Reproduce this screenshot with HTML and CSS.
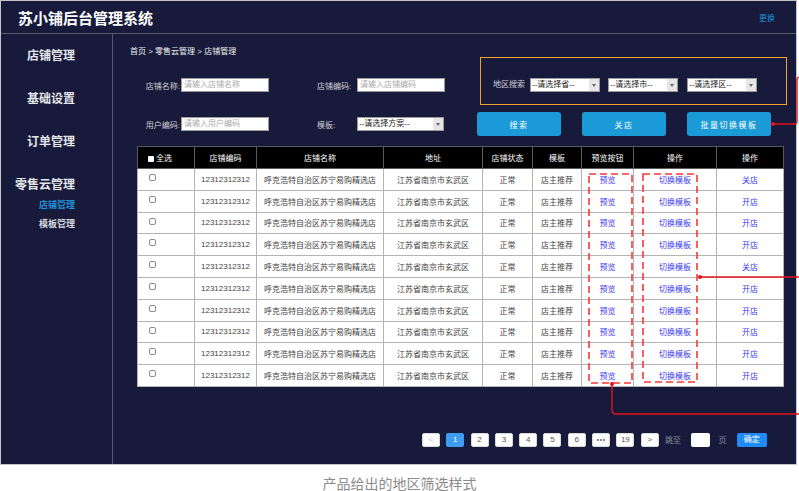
FILE: index.html
```html
<!DOCTYPE html>
<html lang="zh-CN">
<head>
    <meta charset="UTF-8">
    <meta name="viewport" content="width=device-width, initial-scale=1.0">
    <title>苏小铺后台管理系统</title>
    <link rel="stylesheet" href="styles.css">
</head>
<body>

<div class="frame">
    <header class="topbar">
        <h1>苏小铺后台管理系统</h1>
        <a class="swap">更换</a>
    </header>

    <div class="layout">
        <aside class="sidebar">
            <div class="nav-item">店铺管理</div>
            <div class="nav-item">基础设置</div>
            <div class="nav-item">订单管理</div>
            <div class="nav-item group">零售云管理</div>
            <div class="sub-item active">店铺管理</div>
            <div class="sub-item">模板管理</div>
        </aside>

        <main class="content">
            <div class="crumb">首页 &gt; 零售云管理 &gt; 店铺管理</div>

            <div class="filters">
                <div class="filter-fields">
                    <div class="field-row">
                        <div class="field">
                            <span class="lbl">店铺名称:</span>
                            <span class="txt">请输入店铺名称</span>
                        </div>
                        <div class="field second">
                            <span class="lbl">店铺编码:</span>
                            <span class="txt">请输入店铺编码</span>
                        </div>
                    </div>
                    <div class="field-row">
                        <div class="field">
                            <span class="lbl">用户编码:</span>
                            <span class="txt">请输入用户编码</span>
                        </div>
                        <div class="field second">
                            <span class="lbl">模板:</span>
                            <span class="select wide"><span class="val">--请选择方案--</span><span class="arrow"></span></span>
                        </div>
                    </div>
                </div>

                <div class="filter-side">
                    <div class="region">
                        <span class="region-lbl">地区搜索</span>
                        <span class="select"><span class="val">--请选择省--</span><span class="arrow"></span></span>
                        <span class="select"><span class="val">--请选择市--</span><span class="arrow"></span></span>
                        <span class="select"><span class="val">--请选择区--</span><span class="arrow"></span></span>
                    </div>
                    <div class="actions">
                        <button class="btn">搜索</button>
                        <button class="btn">关店</button>
                        <button class="btn">批量切换模板</button>
                    </div>
                </div>
            </div>

            <table class="grid">
                <colgroup>
                    <col class="c-check"><col class="c-code"><col class="c-name"><col class="c-addr">
                    <col class="c-state"><col class="c-tpl"><col class="c-view"><col class="c-op"><col class="c-op2">
                </colgroup>
                <thead>
                    <tr>
                        <th class="first"><span class="check head"></span>全选</th>
                        <th>店铺编码</th>
                        <th>店铺名称</th>
                        <th>地址</th>
                        <th>店铺状态</th>
                        <th>模板</th>
                        <th>预览按钮</th>
                        <th>操作</th>
                        <th>操作</th>
                    </tr>
                </thead>
                <tbody>
                    <tr><td class="first"><span class="check"></span></td><td>12312312312</td><td>呼克浩特自治区苏宁易购精选店</td><td>江苏省南京市玄武区</td><td>正常</td><td>店主推荐</td><td><a>预览</a></td><td><a>切换模板</a></td><td><a>关店</a></td></tr>
                    <tr><td class="first"><span class="check"></span></td><td>12312312312</td><td>呼克浩特自治区苏宁易购精选店</td><td>江苏省南京市玄武区</td><td>正常</td><td>店主推荐</td><td><a>预览</a></td><td><a>切换模板</a></td><td><a>开店</a></td></tr>
                    <tr><td class="first"><span class="check"></span></td><td>12312312312</td><td>呼克浩特自治区苏宁易购精选店</td><td>江苏省南京市玄武区</td><td>正常</td><td>店主推荐</td><td><a>预览</a></td><td><a>切换模板</a></td><td><a>开店</a></td></tr>
                    <tr><td class="first"><span class="check"></span></td><td>12312312312</td><td>呼克浩特自治区苏宁易购精选店</td><td>江苏省南京市玄武区</td><td>正常</td><td>店主推荐</td><td><a>预览</a></td><td><a>切换模板</a></td><td><a>开店</a></td></tr>
                    <tr><td class="first"><span class="check"></span></td><td>12312312312</td><td>呼克浩特自治区苏宁易购精选店</td><td>江苏省南京市玄武区</td><td>正常</td><td>店主推荐</td><td><a>预览</a></td><td><a>切换模板</a></td><td><a>关店</a></td></tr>
                    <tr><td class="first"><span class="check"></span></td><td>12312312312</td><td>呼克浩特自治区苏宁易购精选店</td><td>江苏省南京市玄武区</td><td>正常</td><td>店主推荐</td><td><a>预览</a></td><td><a>切换模板</a></td><td><a>开店</a></td></tr>
                    <tr><td class="first"><span class="check"></span></td><td>12312312312</td><td>呼克浩特自治区苏宁易购精选店</td><td>江苏省南京市玄武区</td><td>正常</td><td>店主推荐</td><td><a>预览</a></td><td><a>切换模板</a></td><td><a>开店</a></td></tr>
                    <tr><td class="first"><span class="check"></span></td><td>12312312312</td><td>呼克浩特自治区苏宁易购精选店</td><td>江苏省南京市玄武区</td><td>正常</td><td>店主推荐</td><td><a>预览</a></td><td><a>切换模板</a></td><td><a>开店</a></td></tr>
                    <tr><td class="first"><span class="check"></span></td><td>12312312312</td><td>呼克浩特自治区苏宁易购精选店</td><td>江苏省南京市玄武区</td><td>正常</td><td>店主推荐</td><td><a>预览</a></td><td><a>切换模板</a></td><td><a>开店</a></td></tr>
                    <tr><td class="first"><span class="check"></span></td><td>12312312312</td><td>呼克浩特自治区苏宁易购精选店</td><td>江苏省南京市玄武区</td><td>正常</td><td>店主推荐</td><td><a>预览</a></td><td><a>切换模板</a></td><td><a>开店</a></td></tr>
                </tbody>
            </table>

            <div class="pager">
                <span class="pg dim">&lt;</span>
                <span class="pg on">1</span>
                <span class="pg">2</span>
                <span class="pg">3</span>
                <span class="pg">4</span>
                <span class="pg">5</span>
                <span class="pg">6</span>
                <span class="pg more"><i></i><i></i><i></i></span>
                <span class="pg">19</span>
                <span class="pg">&gt;</span>
                <span class="jump">跳至</span>
                <span class="pg-input"></span>
                <span class="jump">页</span>
                <span class="ok">确定</span>
            </div>
        </main>
    </div>
</div>

<p class="caption">产品给出的地区筛选样式</p>

<svg class="notes" width="799" height="491" viewBox="0 0 799 491">
    <rect x="589" y="174" width="43" height="209" fill="none" stroke="#ff3535" stroke-width="1.6" stroke-dasharray="7 4"/>
    <rect x="643" y="174" width="54" height="208" fill="none" stroke="#ff3535" stroke-width="1.6" stroke-dasharray="7 4"/>
    <path d="M773 124 H794 Q797 124 797 121 V80 Q797 77 800 77" fill="none" stroke="#e3141c" stroke-width="1.4"/>
    <circle cx="773" cy="124" r="2" fill="#e3141c"/>
    <path d="M700 277 H800" fill="none" stroke="#e3141c" stroke-width="1.4"/>
    <circle cx="700" cy="277" r="2" fill="#e3141c"/>
    <path d="M612 384 V410 Q612 414 616 414 H800" fill="none" stroke="#e3141c" stroke-width="1.4"/>
    <circle cx="612" cy="384" r="2" fill="#e3141c"/>
</svg>

</body>
</html>
```

FILE: styles.css
```css
* {
    box-sizing: border-box;
}
body {
    margin: 0;
    width: 799px;
    height: 491px;
    overflow: hidden;
    position: relative;
    background: #fff;
    font-family: "Liberation Sans", "Noto Sans CJK SC", sans-serif;
}
.frame {
    width: 797px;
    height: 465px;
    background: #171a3a;
    border: 1px solid #c4c4c8;
}
.topbar {
    height: 33px;
    display: flex;
    align-items: center;
    justify-content: space-between;
    padding: 0 21px 0 17px;
    border-bottom: 1px solid #55586e;
}
.topbar h1 {
    margin: 0;
    font-size: 15px;
    font-weight: bold;
    color: #fff;
}
.swap {
    font-size: 8px;
    color: #1f8fd6;
}
.layout {
    display: flex;
    height: 430px;
}
.sidebar {
    width: 112px;
    border-right: 1px solid #55586e;
    text-align: right;
    padding: 15px 37px 0 0;
}
.nav-item {
    font-size: 12px;
    font-weight: bold;
    line-height: 15px;
    color: #e6e6ea;
    margin-bottom: 28px;
}
.nav-item.group {
    margin-bottom: 6px;
}
.sub-item {
    font-size: 9px;
    font-weight: bold;
    line-height: 12px;
    color: #d8d8de;
    margin-bottom: 7px;
}
.sub-item.active {
    color: #1f93dc;
}
.content {
    flex: 1;
    padding: 13px 0 0 17px;
}
.crumb {
    font-size: 8px;
    line-height: 10px;
    color: #eee;
}
.filters {
    display: flex;
    height: 79px;
}
.filter-fields {
    width: 347px;
    padding-top: 21px;
}
.field-row {
    display: flex;
    height: 14px;
}
.field-row + .field-row {
    margin-top: 25px;
}
.field {
    display: flex;
    align-items: center;
}
.field .lbl {
    width: 50px;
    text-align: right;
    margin-right: 1px;
    font-size: 8px;
    color: #d0d0d6;
}
.field.second {
    margin-left: 48px;
}
.field.second .lbl {
    width: 39px;
    text-align: left;
}
.txt {
    width: 88px;
    height: 14px;
    background: #fff;
    border: 1px solid #9a9a9a;
    font-size: 8px;
    line-height: 12px;
    padding-left: 2px;
    color: #aaa;
}
.select {
    width: 70px;
    height: 14px;
    background: #fff;
    border: 1px solid #9a9a9a;
    display: flex;
    font-size: 8px;
    line-height: 12px;
    color: #222;
}
.select.wide {
    width: 87px;
}
.select .val {
    flex: 1;
    padding-left: 1px;
    white-space: nowrap;
    overflow: hidden;
}
.select .arrow {
    width: 10px;
    background: #e6e6e6;
    position: relative;
}
.select .arrow::after {
    content: "";
    position: absolute;
    left: 3px;
    top: 5px;
    border-left: 2px solid transparent;
    border-right: 2px solid transparent;
    border-top: 3px solid #666;
}
.filter-side {
    width: 310px;
}
.region {
    margin-left: 3px;
    width: 307px;
    height: 48px;
    border: 1px solid #f2a22e;
    padding: 20px 0 0 12px;
    display: flex;
}
.region-lbl {
    font-size: 8px;
    line-height: 14px;
    color: #d0d0d6;
    margin-right: 5px;
}
.region .select + .select {
    margin-left: 8px;
}
.region .select:last-child {
    margin-left: 9px;
}
.actions {
    display: flex;
    gap: 21px;
    margin-top: 7px;
}
.btn {
    width: 84px;
    height: 24px;
    border: none;
    border-radius: 3px;
    background: #1a9ad6;
    color: #fff;
    font-family: inherit;
    font-size: 8px;
    letter-spacing: 1.5px;
    padding: 0;
}
.grid {
    margin: 10px 0 0 7px;
    width: 646px;
    table-layout: fixed;
    border-collapse: collapse;
    font-size: 8px;
}
.c-check { width: 57px; }
.c-code { width: 62px; }
.c-name { width: 127px; }
.c-addr { width: 99px; }
.c-state { width: 50px; }
.c-tpl { width: 49px; }
.c-view { width: 52px; }
.c-op { width: 83px; }
.c-op2 { width: 67px; }
.grid th {
    height: 22px;
    background: #000;
    color: #fff;
    font-weight: normal;
    border: 1px solid #5a5a5a;
    padding: 0;
}
.grid td {
    height: 21.8px;
    background: #fff;
    color: #444;
    text-align: center;
    border: 1px solid #b4b4b4;
    padding: 0;
    white-space: nowrap;
}
.grid th.first {
    text-align: left;
    padding-left: 10px;
}
.grid td.first {
    text-align: left;
    vertical-align: top;
    padding: 5px 0 0 11px;
}
.grid a {
    color: #3a3af2;
}
.check {
    display: inline-block;
    width: 7px;
    height: 7px;
    border: 1px solid #8c8c8c;
    border-radius: 2px;
    vertical-align: top;
}
.check.head {
    width: 6px;
    height: 6px;
    background: #fff;
    border: none;
    border-radius: 1px;
    margin-right: 2px;
    vertical-align: -1px;
}
.pager {
    display: flex;
    align-items: center;
    gap: 6.3px;
    margin-top: 46px;
    padding-left: 292px;
    font-size: 8px;
}
.pg {
    width: 18px;
    height: 14px;
    background: #fff;
    border: 1px solid #d9d9d9;
    border-radius: 2px;
    text-align: center;
    line-height: 12px;
    color: #555;
}
.pg.dim {
    color: #bbb;
}
.pg.on {
    background: #3d9df2;
    border-color: #3d9df2;
    color: #fff;
}
.pg.more {
    display: flex;
    align-items: center;
    justify-content: center;
    gap: 1px;
}
.pg.more i {
    width: 2px;
    height: 2px;
    border-radius: 1px;
    background: #666;
}
.jump {
    color: #8a8ca0;
}
.pg-input {
    width: 19px;
    height: 14px;
    background: #fff;
    border-radius: 2px;
    margin: 0 2px 0 4px;
}
.ok {
    width: 30px;
    height: 14px;
    line-height: 14px;
    margin-left: 4px;
    text-align: center;
    background: #1f8cf6;
    color: #fff;
    border-radius: 2px;
}
.caption {
    margin: 11px 0 0;
    text-align: center;
    font-size: 14px;
    line-height: 16px;
    color: #8a8a8a;
}
.notes {
    position: absolute;
    left: 0;
    top: 0;
    pointer-events: none;
}
```
